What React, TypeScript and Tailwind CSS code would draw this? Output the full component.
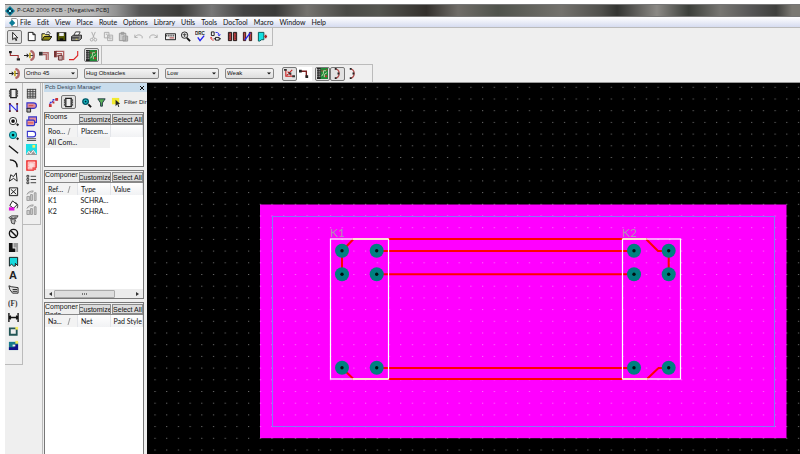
import type { ReactNode } from "react";
import clsx from "clsx";

interface Tool {
  name: string;
  icon: ReactNode;
  pressed?: boolean;
  white?: boolean;
}

const stroke = { fill: "none", stroke: "#111", strokeWidth: 1 };

const trackIcon = (
  <g>
    <path d="M0 6h4" {...stroke} />
    <path d="M3 3.500L5.500 6 3 8.500z" fill="#222" />
    <path d="M6.500 3v6" stroke="#c8b030" strokeWidth="2" />
    <path d="M7 1c5 1 5 9 0 10" fill="none" stroke="#b06868" strokeWidth="2.500" />
    <path d="M7 6h3" stroke="#333" />
  </g>
);

const chipIcon = (
  <g>
    <path d="M3 1.500h6v9H3z" fill="#eee" stroke="#222" strokeWidth="1.500" />
    <path d="M1 2.500h2v2H1zM1 5h2v2H1zM1 7.500h2v2H1zM9 2.500h2v2H9zM9 5h2v2H9zM9 7.500h2v2H9z" fill="#555" />
  </g>
);

const boardIcon = (
  <g>
    <path d="M0 0h12v12H0z" fill="#1f8a36" />
    <path d="M0 0h4v12H0z" fill="#222" />
    <path d="M1 1v10M3 1v10" stroke="#ddd" strokeDasharray="1 1" strokeWidth="1" />
    <path d="M5 9l2-3V3h3M8 10V7l3-2" fill="none" stroke="#c9dcb0" />
    <path d="M9 8h2v2H9zM5 2h1v2H5zM10 1h1v2h-1z" fill="#c03030" />
  </g>
);

const cornerIcon = (
  <g>
    <path d="M1 3.500h7v6" fill="none" stroke="#7a2020" strokeWidth="1.500" />
    <path d="M0 2h3v3H0zM7 8h3v3H7z" fill="#222" />
  </g>
);

const arcIcon = (
  <g>
    <path d="M4 1c5 1 5 9 0 10" fill="none" stroke="#b05050" strokeWidth="1.500" />
    <path d="M3 0h2v2H3zM6 5h2v2H6zM3 10h2v2H3z" fill="#222" />
  </g>
);

const funnelIcon = <path d="M2 2h8L7 6.500V10H5V6.500z" fill="#58b058" stroke="#234" strokeWidth="1" />;

const zoomCyan = (
  <g>
    <circle cx="5" cy="5" r="3" fill="#19cfd0" stroke="#056" strokeWidth="1.500" />
    <path d="M4 4h2v2H4z" fill="#024" />
    <path d="M8 8l3 3" stroke="#111" strokeWidth="2" />
  </g>
);

const greyCopy = (
  <path d="M1 11.500V7h3v4.500zM5 11.500V5h2v6.500zM9 11.500V3h2v8.500zM1 5c1-3 4-4 7-4L6.500 3" fill="#ccc" stroke="#999" strokeWidth="1" />
);

const mainTools: Tool[][] = [
  [{ name: "Select", pressed: true, icon: <path d="M4 1.500v8l2-2 1.500 3 1-.5L7 7.500h2.500z" fill="#fff" stroke="#111" strokeWidth="1" /> }],
  [
    { name: "New", icon: <path d="M2.500 1.500h5l2.500 2.500v6.500H2.500zM7.500 1.500V4H10" fill="#fff" stroke="#111" strokeWidth="1" /> },
    {
      name: "Open",
      icon: (
        <g>
          <path d="M1 10V3h3l1 1h4v2" fill="#efe36a" stroke="#111" />
          <path d="M1 10l2.500-4H12L9 10z" fill="#8a8410" stroke="#111" />
          <path d="M6 2c2-2 3-1 4 1" {...stroke} />
        </g>
      ),
    },
    {
      name: "Save",
      icon: (
        <g>
          <path d="M1.500 2h9v8.500h-9z" fill="#555a00" stroke="#111" strokeWidth="1.500" />
          <path d="M3.500 2h5v3.500h-5z" fill="#eee" />
          <path d="M4 8h4v2.500H4z" fill="#111" />
        </g>
      ),
    },
    {
      name: "Print",
      icon: (
        <g>
          <path d="M3 5l2-4h5L8 5z" fill="#fff" stroke="#333" />
          <path d="M.5 6L3 4.500h8.500V8L9 10.500H.5z" fill="#888" stroke="#222" />
          <path d="M1 7.500h7.500" stroke="#222" />
          <path d="M5 9h2" stroke="#e5d84a" />
        </g>
      ),
    },
  ],
  [
    {
      name: "Cut",
      icon: (
        <g fill="none" stroke="#aaa">
          <path d="M4 1l3 7M8 1L5 8" />
          <circle cx="4" cy="9.500" r="1.500" />
          <circle cx="8" cy="9.500" r="1.500" />
        </g>
      ),
    },
    { name: "Copy", icon: <path d="M1.500 1.500h5v6h-5zM5 4.500h5.500v6H5zM3 3.500h2M6.500 6.500h3M6.500 8.500h3" fill="#eee" stroke="#aaa" /> },
    { name: "Paste", icon: <path d="M1.500 2.500h7v8h-7zM3.500 1.500h3v2h-3zM5.500 5.500h5v5.500h-5zM7 7.500h2M7 9h2" fill="#ccc" stroke="#999" /> },
    { name: "Undo", icon: <path d="M2 4v3h3M2 7c2-4 7-3 8-1v2" fill="none" stroke="#aaa" /> },
    { name: "Redo", icon: <path d="M10 4v3H7M10 7C8 3 3 4 2 6v2" fill="none" stroke="#aaa" /> },
  ],
  [
    {
      name: "Measure",
      icon: (
        <g>
          <path d="M.5 3h11v6.500H.5z" fill="#eee" stroke="#111" />
          <path d="M1 5h10" stroke="#333" strokeDasharray="1 1" strokeWidth="2" />
          <path d="M5 7.500h5" stroke="#a33" />
        </g>
      ),
    },
    {
      name: "Zoom",
      icon: (
        <g>
          <circle cx="5" cy="4.500" r="3.500" fill="#ddd" stroke="#222" />
          <path d="M3 4h4M5 2.500v4" stroke="#444" />
          <path d="M7.500 7.500L11 11" stroke="#111" strokeWidth="2" />
        </g>
      ),
    },
    {
      name: "Design rule check",
      icon: (
        <g>
          <text x="0" y="4" fontSize="5" fontWeight="bold" fill="#222" fontFamily="Liberation Sans">DRC</text>
          <path d="M3 7l2.500 3.500L10 5" fill="none" stroke="#2222ee" strokeWidth="1.500" />
        </g>
      ),
    },
    {
      name: "Swap",
      icon: (
        <g>
          <path d="M1.500 1h3v4h-3zM6 7h4v3H6zM4 8.500h2M10 8.500h2" {...stroke} />
          <path d="M6 1.500c3 0 4 1 4 3.500M8.500 4L10 5l1.500-1" fill="none" stroke="#22e" />
          <path d="M1 7c0 2 1 3 3 3M0 8l1-1 1.500 1" fill="none" stroke="#d22" />
        </g>
      ),
    },
  ],
  [
    {
      name: "Layers",
      icon: (
        <g>
          <path d="M1.500 1.500h3.500v9H1.500zM7 1.500h3.500v9H7z" fill="#b44" stroke="#111" />
          <path d="M3 2v8M9 2v8" stroke="#511" strokeDasharray="1 1" />
        </g>
      ),
    },
    {
      name: "Nets",
      icon: (
        <g>
          <path d="M1.500 1.500H4v9H1.500zM8 1.500h2.500v9H8z" fill="#b44" stroke="#311" />
          <path d="M3 10L9 2" stroke="#22e" strokeWidth="1.500" />
        </g>
      ),
    },
    {
      name: "Export",
      icon: (
        <g>
          <path d="M1.500 1.500h6v8H5l-2 1.500H1.500z" fill="#16dfe0" stroke="#055" />
          <path d="M8 6h3M9.500 4v4" stroke="#a22" strokeWidth="1.500" />
        </g>
      ),
    },
  ],
];

const routeTools: Tool[][] = [
  [
    {
      name: "Manual route",
      icon: (
        <g>
          <path d="M1.500 3v3H10v3" fill="none" stroke="#9a3030" strokeWidth="1.200" />
          <path d="M0 1h3v2.500H0zM8.500 9H12v2.500H8.500z" fill="#222" />
        </g>
      ),
    },
    { name: "Interactive route", icon: trackIcon },
    {
      name: "Bus route",
      icon: (
        <g>
          <path d="M4 3h6v8M4 5h4v6" fill="none" stroke="#b06868" strokeWidth="1.500" />
          <path d="M0 2h4v4H0z" fill="#333" />
        </g>
      ),
    },
    {
      name: "Fanout route",
      icon: (
        <g>
          <path d="M2 1.500h8.500V11M3 4h5v3M3 6.500h2V11" fill="none" stroke="#b06060" strokeWidth="1.500" />
          <path d="M0 1h3v7H0z" fill="#733" />
          <path d="M5 6h4v5H5z" fill="#caa" stroke="#633" />
        </g>
      ),
    },
    {
      name: "Miter",
      icon: <path d="M0 10.500h5L9.500 6V1" fill="none" stroke="#d22" strokeWidth="1.200" />,
    },
  ],
  [{ name: "Route board", pressed: true, icon: boardIcon }],
];

const optionTools: Tool[][] = [
  [
    {
      name: "Allow loops",
      pressed: true,
      icon: (
        <g>
          <path d="M2 2v7h8M9 2L3 8M4 4l4 4" fill="none" stroke="#c22" strokeWidth="1.200" />
          <path d="M0 1h3v2H0zM5 5h3v2H5zM9 8h3v2H9z" fill="#333" />
        </g>
      ),
    },
    { name: "Corner style", white: true, icon: cornerIcon },
  ],
  [
    { name: "Show board", pressed: true, icon: boardIcon },
    { name: "Arc in", pressed: true, icon: arcIcon },
    { name: "Arc out", icon: arcIcon },
  ],
];

const placeTools: Tool[] = [
  { name: "Component", icon: chipIcon },
  {
    name: "Connection",
    icon: (
      <g>
        <path d="M2 2v8M10 2v8" stroke="#33c" strokeWidth="1.500" />
        <path d="M2 2l8 8" stroke="#22e" strokeWidth="1.200" />
        <path d="M1 1h2v2H1zM1 9h2v2H1zM9 1h2v2H9zM9 9h2v2H9z" fill="#622" />
      </g>
    ),
  },
  {
    name: "Pad",
    icon: (
      <g>
        <circle cx="5.500" cy="5.500" r="4" fill="#fff" stroke="#222" />
        <circle cx="5.500" cy="5.500" r="2" fill="#111" />
        <path d="M9 9.500h3M10.500 8v3" stroke="#111" />
      </g>
    ),
  },
  {
    name: "Via",
    icon: (
      <g>
        <circle cx="5.500" cy="5.500" r="4" fill="#1fd3d6" stroke="#067" />
        <circle cx="5.500" cy="5.500" r="1.500" fill="#022" />
        <path d="M9 9.500h3M10.500 8v3" stroke="#111" />
      </g>
    ),
  },
  { name: "Line", icon: <path d="M1 2l10 8" stroke="#111" strokeWidth="1.500" /> },
  { name: "Arc", icon: <path d="M2 2c5 0 8 3 8 8" {...stroke} strokeWidth={1.5} /> },
  { name: "Polygon", icon: <path d="M1.500 10L3 3l3 2 3-4 1 9-4-3z" {...stroke} /> },
  { name: "Point", icon: <path d="M1.500 2h9v8.500h-9zM3 3.500l6 5.500M9 3.500L3 9" {...stroke} /> },
  {
    name: "Copper pour",
    icon: (
      <g>
        <path d="M5 1l5 4-4 4-4-3z" fill="#fff" stroke="#111" />
        <path d="M8 3c3 1 3 3 2 6" {...stroke} />
        <path d="M1 8h6v3.500H1z" fill="#e010e0" />
      </g>
    ),
  },
  {
    name: "Cutout",
    icon: (
      <g>
        <path d="M1 4l3-2h7L9 5H2zM3 5l1 5 3 1 1-5" fill="#bbb" stroke="#444" />
        <path d="M3 3l6 5M3 7l6-4" stroke="#555" />
      </g>
    ),
  },
  {
    name: "Keepout",
    icon: (
      <g fill="none" stroke="#111" strokeWidth="1.500">
        <circle cx="6" cy="6" r="4.500" />
        <path d="M3 3l6 6" />
      </g>
    ),
  },
  {
    name: "Plane",
    icon: (
      <g>
        <path d="M1 1h4v6h3v4H1z" fill="#111" />
        <path d="M6 1h5v10H9V6H6z" fill="#999" />
      </g>
    ),
  },
  { name: "Room", icon: <path d="M1.500 1.500h9v9L8 8v3H6L4 9l-2.500 2z" fill="#17d8dc" stroke="#111" /> },
  {
    name: "Text",
    icon: <text x="1" y="10" fontSize="12" fontWeight="bold" fill="#222" fontFamily="Liberation Sans">A</text>,
  },
  { name: "Attribute", icon: <path d="M1 2l3 1 7 1v6H5L2 6zM5 6h5M5 8h5" fill="#ddd" stroke="#222" /> },
  {
    name: "Field",
    icon: <text x="0" y="9" fontSize="8" fontWeight="bold" fill="#333" fontFamily="Liberation Serif">(F)</text>,
  },
  { name: "Dimension", icon: <path d="M1 1v10M11 1v10M1 6h10M3 4L1.500 6 3 8M9 4l1.500 2L9 8" {...stroke} strokeWidth={1.5} /> },
  {
    name: "Area",
    icon: (
      <g>
        <path d="M2 2.500h7.500v7H2z" fill="#eee" stroke="#255" strokeWidth="2" />
        <path d="M8 1h3v3H8z" fill="#f2ea60" />
      </g>
    ),
  },
  {
    name: "Detail",
    icon: (
      <g>
        <path d="M1 2h10v9H1z" fill="#177a8a" />
        <path d="M1 8h10v3H1zM7 5h4v6H7z" fill="#118" />
        <path d="M5 5h3v2H5z" fill="#eee" />
        <path d="M8 1h3v3H8z" fill="#f2ea60" />
      </g>
    ),
  },
];

const docTools: Tool[][] = [
  [
    {
      name: "Table",
      icon: (
        <g>
          <path d="M1 1h10v10H1z" fill="#ddd" />
          <path d="M1 1.500h10M1 4h10M1 6.500h10M1 9h10M1 11h10M1.500 1v10M4.500 1v10M7.500 1v10M10.500 1v10" {...stroke} stroke="#444" />
        </g>
      ),
    },
    {
      name: "Net note",
      icon: (
        <g>
          <path d="M1 1h7c4.500 0 4.500 6 0 6H1z" fill="#e09098" stroke="#33c" strokeWidth="1.200" />
          <path d="M3 4h5" stroke="#c44" />
          <path d="M1 7h4v4H1z" fill="#aaa" stroke="#222" />
        </g>
      ),
    },
    {
      name: "Layer note",
      icon: (
        <g>
          <path d="M3 1h8.500v6H3z" fill="#e09098" stroke="#33c" strokeWidth="1.200" />
          <path d="M1 4.500h7c2 0 2 6 0 6H1z" fill="#e8a0a0" stroke="#33c" strokeWidth="1.200" />
          <path d="M2 7.500h6" stroke="#d44" />
        </g>
      ),
    },
    {
      name: "Drill note",
      icon: (
        <g>
          <path d="M1.500 1.500h6c4 0 4 6 0 6h-6z" fill="#fff" stroke="#33c" strokeWidth="1.200" />
          <path d="M1 9.500h10M1 11.500h10" stroke="#444" />
        </g>
      ),
    },
    {
      name: "Picture",
      icon: (
        <g>
          <path d="M0 0h12v12H0z" fill="#1bdfe6" />
          <path d="M0 12l3-5 2 1 3-2 4 6z" fill="#999" />
          <path d="M1 11l2-3 2 3 3-4 3 4" fill="none" stroke="#fff" />
          <path d="M7 1h3v3H7z" fill="#f6f060" />
        </g>
      ),
    },
  ],
  [
    {
      name: "Board outline",
      icon: (
        <g>
          <path d="M1 1h10v7L8 11H1z" fill="#fcdcdc" stroke="#e22" strokeWidth="1.500" />
          <path d="M3 3h6v4L7 9H3z" fill="none" stroke="#f77" strokeDasharray="1 1" />
          <path d="M7 8h4v3H7z" fill="#e55" />
        </g>
      ),
    },
    { name: "Notes", icon: <path d="M1 1.500h2v2H1zM1 5h2v2H1zM1 8.500h2v2H1zM5 2.500h6M5 6h6M5 9.500h6" {...stroke} stroke="#333" /> },
  ],
  [
    { name: "Previous", icon: greyCopy },
    { name: "Next", icon: greyCopy },
  ],
];

const managerTools: Tool[] = [
  {
    name: "Nets view",
    icon: (
      <g>
        <path d="M2 9V6h3V3h5" fill="none" stroke="#33d" strokeWidth="1.500" strokeDasharray="2 1" />
        <path d="M8 1h3v3H8zM5 5h2v2H5zM1 8h3v3H1z" fill="#c33" />
      </g>
    ),
  },
  { name: "Components view", pressed: true, icon: chipIcon },
];

const menus = ["File", "Edit", "View", "Place", "Route", "Options", "Library", "Utils", "Tools", "DocTool", "Macro", "Window", "Help"];

const rooms = [["All Com...", ""]];
const components = [
  ["K1", "SCHRA...", ""],
  ["K2", "SCHRA...", ""],
];

function ToolButton({ tool }: { tool: Tool }) {
  return (
    <button
      type="button"
      aria-label={tool.name}
      className={clsx(
        "flex h-[14px] w-[15px] shrink-0 items-center justify-center",
        tool.pressed && "rounded-[2px] border border-[#777] bg-[#e2e2e2]",
        tool.white && "bg-white"
      )}
    >
      <svg viewBox="0 0 12 12" className="h-[11px] w-[11px] shrink-0">
        {tool.icon}
      </svg>
    </button>
  );
}

function ToolGroups({ groups }: { groups: Tool[][] }) {
  return (
    <>
      {groups.map((group, index) => (
        <div key={index} className="flex">
          {group.map((tool) => (
            <ToolButton key={tool.name} tool={tool} />
          ))}
        </div>
      ))}
    </>
  );
}

function Dropdown({ label, value, width }: { label: string; value: string; width: string }) {
  return (
    <div className={clsx("relative", width)}>
      <select
        aria-label={label}
        defaultValue={value}
        className="block h-[11px] w-full appearance-none rounded-[2px] border border-[#888] bg-gradient-to-b from-[#f4f4f4] to-[#dedede] pl-px font-['Liberation_Sans',sans-serif] text-[6px] leading-[9px] text-[#111]"
      >
        <option>{value}</option>
      </select>
      <svg viewBox="0 0 4 2" className="pointer-events-none absolute right-[3px] top-1 h-[3px] w-1">
        <path d="M0 0h4L2 2z" fill="#111" />
      </svg>
    </div>
  );
}

interface ListPaneProps {
  title: string;
  columns: string[];
  rows: string[][];
  className?: string;
  highlight?: boolean;
  children?: ReactNode;
}

function ListPane({ title, columns, rows, className, highlight, children }: ListPaneProps) {
  return (
    <section className={clsx("flex flex-col overflow-hidden border border-[#777] bg-white", className)}>
      <div className="flex h-3 shrink-0 gap-px overflow-hidden border-b border-[#888] bg-[#efefef] font-['Liberation_Sans',sans-serif]">
        <h2 className="w-[33px] shrink-0 overflow-hidden leading-2">{title}</h2>
        <button type="button" className="mt-px flex h-[10px] w-8 shrink-0 items-center justify-center overflow-hidden border border-[#8a8a8a] bg-[#dcdcdc]">
          Customize
        </button>
        <button type="button" className="mt-px flex h-[10px] min-w-0 flex-1 items-center justify-center overflow-hidden whitespace-nowrap border border-[#8a8a8a] bg-[#dcdcdc]">
          Select All
        </button>
      </div>
      <table className="w-full table-fixed text-left">
        <thead>
          <tr className="h-3 bg-gradient-to-b from-white to-[#f1f2f4]">
            {columns.map((column, index) => (
              <th
                key={column}
                className={clsx(
                  "overflow-hidden whitespace-nowrap border-r border-[#e4e6ea] p-0 pl-[3px] font-normal",
                  index === 0 && "bg-[#f3f3f3]"
                )}
              >
                <span className="flex items-center justify-between pr-[6px]">
                  {column}
                  {index === 0 && (
                    <svg viewBox="0 0 4 7" className="h-[7px] w-1">
                      <path d="M1 7L3 0" stroke="#999" strokeWidth="1" />
                    </svg>
                  )}
                </span>
              </th>
            ))}
          </tr>
        </thead>
        <tbody>
          {rows.map((row) => (
            <tr key={row[0]} className="h-[11px]">
              {row.map((cell, index) => (
                <td key={index} className={clsx("whitespace-nowrap p-0 pl-[3px]", highlight && "bg-[#f0f0f0]")}>
                  {cell}
                </td>
              ))}
            </tr>
          ))}
        </tbody>
      </table>
      {children}
    </section>
  );
}

function DesignManager() {
  return (
    <aside className="flex w-[105px] shrink-0 flex-col border-l border-[#bbb] bg-[#efefef] pl-px">
      <div className="flex h-[9px] shrink-0 items-center justify-between bg-[#c8dcec] pl-px pr-[3px] font-['Liberation_Sans',sans-serif] text-[6px] text-[#345]">
        <span>Pcb Design Manager</span>
        <button type="button" aria-label="Close">
          <svg viewBox="0 0 4 4" className="h-1 w-1">
            <path d="M0 0l4 4M4 0L0 4" stroke="#111" strokeWidth="1" />
          </svg>
        </button>
      </div>
      <div className="flex h-[20px] shrink-0 items-center overflow-hidden pl-[2px]">
        <ToolButton tool={managerTools[0]} />
        <ToolButton tool={managerTools[1]} />
        <div className="ml-[3px] flex">
          <ToolButton tool={{ name: "Zoom to selection", icon: zoomCyan }} />
          <ToolButton tool={{ name: "Filter", icon: funnelIcon }} />
          <ToolButton
            tool={{
              name: "Highlight",
              icon: (
                <g>
                  <path d="M1 1h8v7H1z" fill="#f2ea30" />
                  <path d="M5 3v7l2-2 1 3 1-.5L8 7.500h2z" fill="#222" />
                </g>
              ),
            }}
          />
        </div>
        <span className="whitespace-nowrap font-['Liberation_Sans',sans-serif] text-[6px]">Filter Dir</span>
      </div>
      <div className="flex min-h-0 flex-1 flex-col gap-[3px] pr-[3px]">
        <ListPane title="Rooms" columns={["Roo...", "Placem...", ""]} rows={rooms} className="h-[55px] shrink-0" highlight />
        <ListPane title="Components" columns={["Ref...", "Type", "Value"]} rows={components} className="h-[129px] shrink-0">
          <div className="mt-auto flex h-[9px] items-center justify-between bg-[#ececec] px-1">
            <svg viewBox="0 0 3 4" className="h-1 w-[3px]">
              <path d="M3 0v4L0 2z" fill="#333" />
            </svg>
            <div className="mr-auto ml-[2px] flex h-2 w-[61px] items-center justify-center gap-px rounded-[1px] border border-[#aaa] bg-[#dedede]">
              <i className="h-[2px] w-px bg-[#777]" />
              <i className="h-[2px] w-px bg-[#777]" />
              <i className="h-[2px] w-px bg-[#777]" />
            </div>
            <svg viewBox="0 0 3 4" className="h-1 w-[3px]">
              <path d="M0 0v4l3-2z" fill="#333" />
            </svg>
          </div>
        </ListPane>
        <ListPane title="Component Pads" columns={["Na...", "Net", "Pad Style"]} rows={[]} className="flex-1 border-b-0" />
      </div>
    </aside>
  );
}

const padXs = [342, 376.7, 634, 668.7];
const padYs = [250.8, 274.3, 367.8];

function Board() {
  return (
    <main className="min-w-0 flex-1 bg-black">
      <svg className="block h-full w-full" aria-label="PCB layout">
        <defs>
          <pattern id="grid" x="259.7" y="203.8" width="11.7" height="11.7" patternUnits="userSpaceOnUse">
            <rect width="1.200" height="1" fill="#fff" opacity="0.42" />
          </pattern>
        </defs>
        <g transform="translate(-147 -83)">
          <rect x="260" y="204.500" width="526.500" height="233.700" fill="#ff00ff" />
          <rect x="0" y="0" width="2400" height="1600" fill="url(#grid)" />
          <rect x="272.500" y="216.500" width="502" height="210" fill="none" stroke="#8478f4" />
          <g fill="none" stroke="#ff0000" strokeWidth="2">
            <path d="M342 274V251L353.500 239H646l12 12h10.700v23" />
            <path d="M376.700 251H634M376.700 274.300H634M376.700 368H634" />
            <path d="M342 368l11.500 11H647l11.500-11h10" />
          </g>
          <path d="M353 239h35M623 239h23M353 379h35M623 379h24" stroke="#ffa890" strokeWidth="2" />
          <g fill="none" stroke="#fff" strokeWidth="1.200">
            <rect x="330.500" y="239" width="58" height="140" />
            <rect x="622.500" y="239" width="58" height="140" />
          </g>
          {padYs.map((y) =>
            padXs.map((x) => (
              <g key={`${x}-${y}`}>
                <circle cx={x} cy={y} r="7" fill="#008080" />
                <circle cx={x} cy={y} r="1.700" fill="#001010" />
              </g>
            ))
          )}
          <g fill="#b48cb8" fontFamily="Lato, sans-serif" fontSize="12">
            <text x="330" y="237">K1</text>
            <text x="622" y="237">K2</text>
          </g>
        </g>
      </svg>
    </main>
  );
}

export default function App() {
  return (
    <div className="flex h-screen flex-col overflow-hidden bg-white pl-[5px] pt-1 font-[Lato,sans-serif] text-[7px] leading-[9px] text-[#111]">
      <header className="shrink-0">
        <div className="flex h-[13px] items-center gap-[2px] border-y border-[#777] bg-[linear-gradient(90deg,#c4c4c4_0%,#b8b8b8_11%,#929292_14%,#555_17%,#3c3c3a_22%,#777_26%,#444_30%,#3a3a38_34%,#75736f_38%,#4a4a46_43%,#555650_47%,#33302c_53%,#706d68_57%,#50534c_62%,#74726d_70%,#50504c_75%,#343532_77%,#8b8985_82%,#3c3f3a_86%,#777672_90%,#555_94%,#3f403d_97%,#7b7973_99%)]">
          <svg viewBox="0 0 10 10" className="h-[10px] w-[10px]">
            <path d="M5 0l5 5-5 5-5-5z" fill="#0a7c96" />
            <path d="M5 2v6M2 5h6" stroke="#073a58" strokeWidth="2" />
            <path d="M4 4h2v2H4z" fill="#9ff" />
          </svg>
          <h1 className="whitespace-nowrap font-['Open_Sans',sans-serif] text-[6px]">P-CAD 2006 PCB - [Negative.PCB]</h1>
        </div>
        <nav className="flex h-[11px] items-center gap-[6px] border-b border-[#bbb] bg-gradient-to-b from-white to-[#d6dcf0] pl-1">
          <svg viewBox="0 0 10 10" className="-mr-1 h-[9px] w-[9px]">
            <path d="M3 .5h5L9.500 2v7.500H3z" fill="#fff" stroke="#888" />
            <path d="M3.500 2L7 5.500 3.500 9 0 5.500z" fill="#0b7d99" />
          </svg>
          {menus.map((menu) => (
            <button key={menu} type="button">
              {menu}
            </button>
          ))}
        </nav>
      </header>

      <div className="flex shrink-0 flex-col items-start border-b border-[#999] bg-[#efefef]">
        <div className="flex h-[18px] items-center gap-[2px] border-b border-r border-[#bbb] px-[2px]">
          <ToolGroups groups={mainTools} />
        </div>
        <div className="flex h-[18px] items-center gap-[2px] border-r border-[#bbb] px-[2px]">
          <ToolGroups groups={routeTools} />
        </div>
        <div className="flex h-[18px] items-center border-r border-t border-[#bbb] pl-[2px] pr-3">
          <ToolButton tool={{ name: "Route mode", icon: trackIcon }} />
          <div className="ml-[2px] flex gap-[6px]">
            <Dropdown label="Orthogonal mode" value="Ortho 45" width="w-[54px]" />
            <Dropdown label="Obstacle mode" value="Hug Obstacles" width="w-[75px]" />
            <Dropdown label="Gloss level" value="Low" width="w-[54px]" />
            <Dropdown label="Pad entry" value="Weak" width="w-[49px]" />
          </div>
          <div className="ml-2 flex gap-[3px]">
            <ToolGroups groups={optionTools} />
          </div>
        </div>
      </div>

      <div className="flex min-h-0 flex-1 bg-[#efefef]">
        <div className="flex shrink-0 flex-col self-start border-b border-r border-[#bbb] pb-3 pl-px pr-px pt-[3px]">
          {placeTools.map((tool) => (
            <ToolButton key={tool.name} tool={tool} />
          ))}
        </div>
        <div className="mr-px flex shrink-0 flex-col gap-[2px] self-start border-b border-r border-[#bbb] px-px pb-2 pt-[3px]">
          {docTools.map((group, index) => (
            <div key={index} className="flex flex-col">
              {group.map((tool) => (
                <ToolButton key={tool.name} tool={tool} />
              ))}
            </div>
          ))}
        </div>
        <DesignManager />
        <Board />
      </div>
    </div>
  );
}
